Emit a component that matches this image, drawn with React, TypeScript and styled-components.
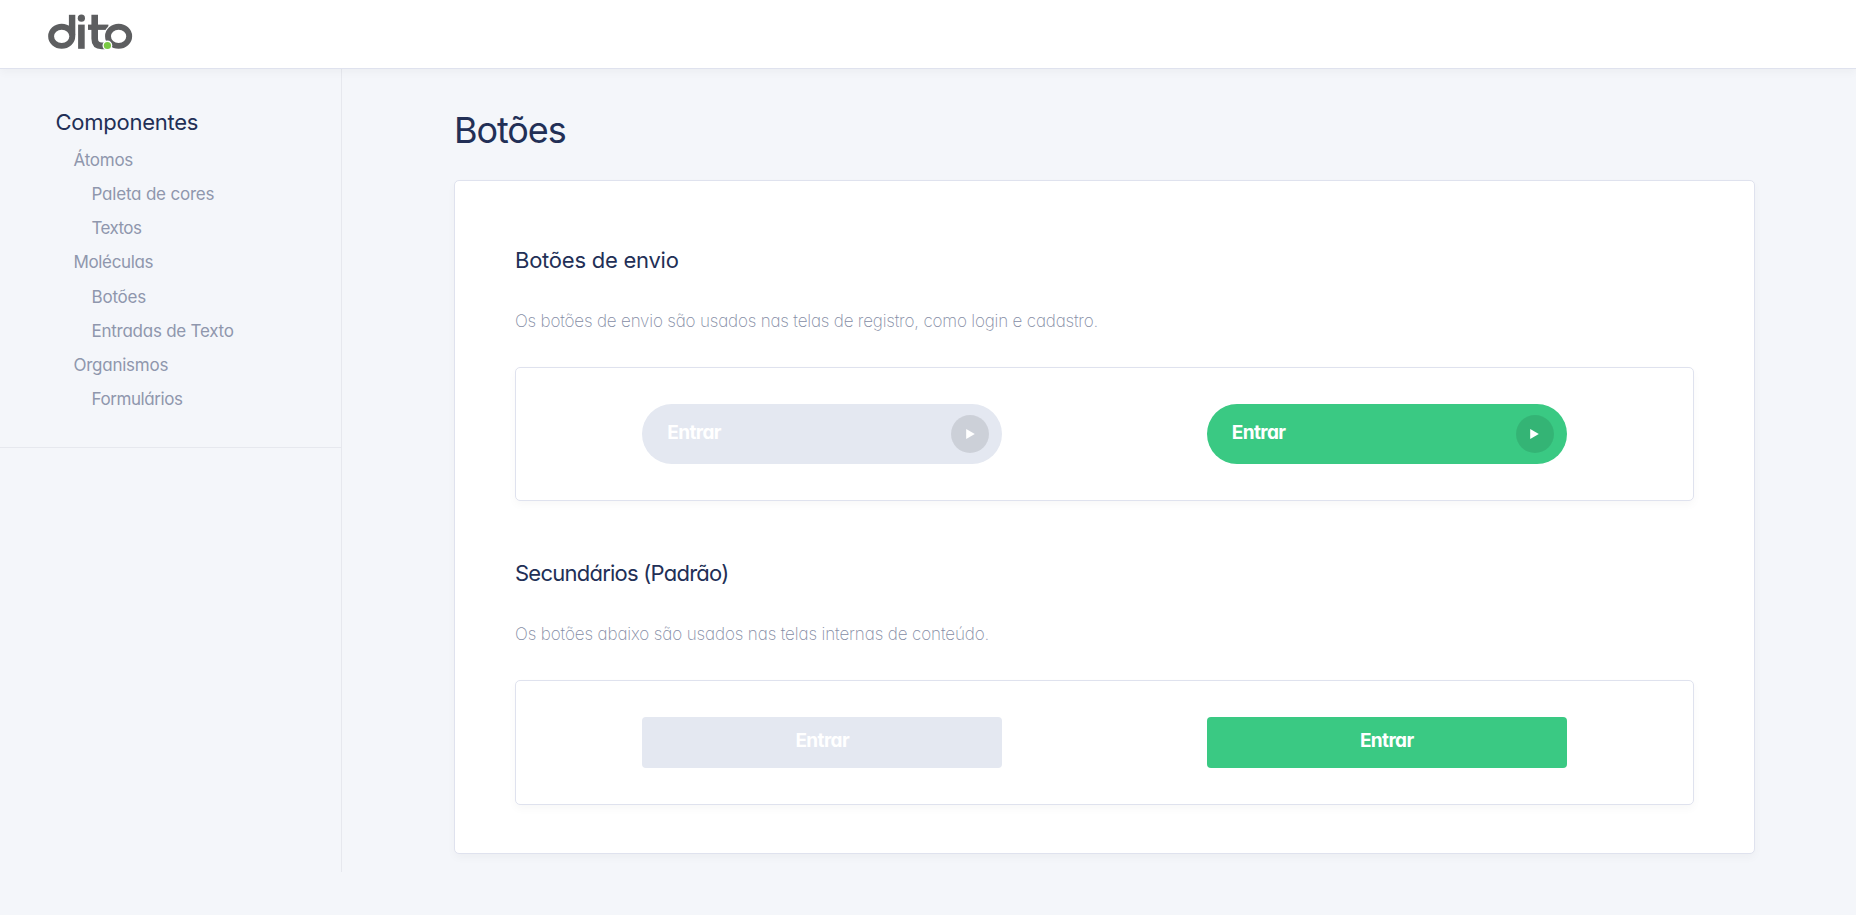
import React from "react";
import styled, { createGlobalStyle } from "styled-components";

const GlobalStyle = createGlobalStyle`
  *, *::before, *::after { box-sizing: border-box; }
  body {
    margin: 0;
    background: #f4f6fa;
    font-family: Inter, "Liberation Sans", sans-serif;
    font-feature-settings: "cv11";
    color: #222f56;
  }
`;

interface Tracked {
  $tracking?: number;
}

const Header = styled.header`
  position: relative;
  display: flex;
  align-items: center;
  height: 69px;
  padding: 0 48px;
  background: #fff;
  border-bottom: 1px solid #dfe2ee;
  box-shadow: 0 4px 8px rgba(0, 0, 0, 0.03);
`;

const Logo = styled.svg`
  display: block;
  margin-top: -5px;
`;

const Layout = styled.div`
  display: flex;
`;

const Sidebar = styled.aside`
  flex: 0 0 342px;
  border-right: 1px solid #e6e8ee;
`;

const Nav = styled.nav`
  padding: 39px 24px 30.8px 55.5px;
  border-bottom: 1px solid #e6e8ee;
`;

const NavTitle = styled.div`
  margin-bottom: 7px;
  font-size: 22px;
  line-height: 28px;
  letter-spacing: -0.25px;
`;

const NavItem = styled.a<Tracked & { $level: number }>`
  display: block;
  padding-left: ${(p) => p.$level * 18}px;
  font-size: 17px;
  line-height: 34.15px;
  letter-spacing: ${(p) => p.$tracking ?? 0}px;
  color: #8f97ad;
  text-decoration: none;
`;

const Main = styled.main`
  flex: 1;
  padding: 39px 101px 18px 112px;
`;

const PageTitle = styled.h1`
  margin: 0 0 28px;
  font-size: 36px;
  font-weight: 400;
  line-height: 44px;
  letter-spacing: -1.1px;
`;

const Card = styled.div`
  padding: 65px 60px 48px;
  background: #fff;
  border: 1px solid #dfe2ee;
  border-radius: 5px;
  box-shadow: 0 4px 8px rgba(0, 0, 0, 0.03);
`;

const Section = styled.section`
  & + & {
    margin-top: 58px;
  }
`;

const SectionTitle = styled.h2<Tracked>`
  margin: 0 0 34.5px;
  font-size: 22px;
  font-weight: 400;
  line-height: 28px;
  letter-spacing: ${(p) => p.$tracking ?? 0}px;
`;

const Description = styled.p<Tracked>`
  margin: 0 0 34.5px;
  font-size: 17px;
  font-weight: 200;
  line-height: 24px;
  letter-spacing: ${(p) => p.$tracking ?? 0}px;
  color: #858da5;
`;

const Panel = styled.div`
  display: flex;
  justify-content: space-around;
  padding: 36px 24px;
  border: 1px solid #dfe2ee;
  border-radius: 5px;
  box-shadow: 0 4px 8px rgba(0, 0, 0, 0.03);
`;

const BaseButton = styled.button`
  display: flex;
  align-items: center;
  width: 360px;
  border: 0;
  background: #3ac983;
  color: #fff;
  font: 700 19px/24px Inter, "Liberation Sans", sans-serif;
  font-feature-settings: "cv11";
  letter-spacing: -0.6px;

  &:disabled {
    background: #e4e8f1;
  }
`;

const SubmitButton = styled(BaseButton)`
  justify-content: space-between;
  height: 60px;
  padding: 0 13px 0 25px;
  border-radius: 30px;
`;

const SecondaryButton = styled(BaseButton)`
  justify-content: center;
  height: 51px;
  padding: 0 0 3px;
  border-radius: 4px;
`;

const SubmitLabel = styled.span`
  padding-bottom: 2px;
`;

const PlayBadge = styled.span`
  display: flex;
  align-items: center;
  justify-content: center;
  width: 38px;
  height: 38px;
  border-radius: 50%;
  background: rgba(0, 0, 0, 0.1);
`;

const PlayIcon = () => (
  <svg width="9" height="10" viewBox="0 0 9 10" fill="#fff">
    <path d="M0.2 0L8.8 5L0.2 10Z" />
  </svg>
);

const DitoLogo = () => (
  <Logo width="85" height="36" viewBox="0 0 85 36" role="img" aria-label="dito">
    <g fill="#5d5e60">
      <rect x="20.9" y="0.8" width="6.4" height="20.5" />
      <rect x="30.1" y="10.6" width="6.6" height="24.2" />
      <circle cx="33.4" cy="4.2" r="3.6" />
      <rect x="40" y="10.6" width="20.4" height="5.3" />
    </g>
    <g fill="none" stroke="#5d5e60">
      <ellipse cx="13.7" cy="22.3" rx="10.6" ry="9.6" strokeWidth="5.9" />
      <path d="M46.7 0.8V24.8Q46.7 31.9 53.8 31.9H57" strokeWidth="6.6" />
    </g>
    <ellipse cx="70.6" cy="22.3" rx="14.6" ry="13.8" fill="#fff" />
    <ellipse cx="70.6" cy="22.3" rx="10.6" ry="9.6" fill="none" stroke="#5d5e60" strokeWidth="5.9" />
    <circle cx="59.4" cy="31.5" r="4.9" fill="#fff" />
    <circle cx="59.4" cy="31.5" r="3.6" fill="#7ac943" />
  </Logo>
);

const navItems = [
  { label: "Átomos", level: 1, tracking: -0.25 },
  { label: "Paleta de cores", level: 2, tracking: -0.2 },
  { label: "Textos", level: 2, tracking: -0.6 },
  { label: "Moléculas", level: 1, tracking: -0.35 },
  { label: "Botões", level: 2, tracking: -0.2 },
  { label: "Entradas de Texto", level: 2, tracking: -0.25 },
  { label: "Organismos", level: 1, tracking: -0.25 },
  { label: "Formulários", level: 2, tracking: -0.42 },
];

export default function App() {
  return (
    <>
      <GlobalStyle />
      <Header>
        <DitoLogo />
      </Header>
      <Layout>
        <Sidebar>
          <Nav>
            <NavTitle>Componentes</NavTitle>
            {navItems.map((item) => (
              <NavItem key={item.label} $level={item.level} $tracking={item.tracking}>
                {item.label}
              </NavItem>
            ))}
          </Nav>
        </Sidebar>
        <Main>
          <PageTitle>Botões</PageTitle>
          <Card>
            <Section>
              <SectionTitle $tracking={-0.24}>Botões de envio</SectionTitle>
              <Description $tracking={-0.18}>
                Os botões de envio são usados nas telas de registro, como login e cadastro.
              </Description>
              <Panel>
                <SubmitButton disabled>
                  <SubmitLabel>Entrar</SubmitLabel>
                  <PlayBadge>
                    <PlayIcon />
                  </PlayBadge>
                </SubmitButton>
                <SubmitButton>
                  <SubmitLabel>Entrar</SubmitLabel>
                  <PlayBadge>
                    <PlayIcon />
                  </PlayBadge>
                </SubmitButton>
              </Panel>
            </Section>
            <Section>
              <SectionTitle $tracking={-0.76}>Secundários (Padrão)</SectionTitle>
              <Description $tracking={-0.12}>
                Os botões abaixo são usados nas telas internas de conteúdo.
              </Description>
              <Panel>
                <SecondaryButton disabled>Entrar</SecondaryButton>
                <SecondaryButton>Entrar</SecondaryButton>
              </Panel>
            </Section>
          </Card>
        </Main>
      </Layout>
    </>
  );
}
